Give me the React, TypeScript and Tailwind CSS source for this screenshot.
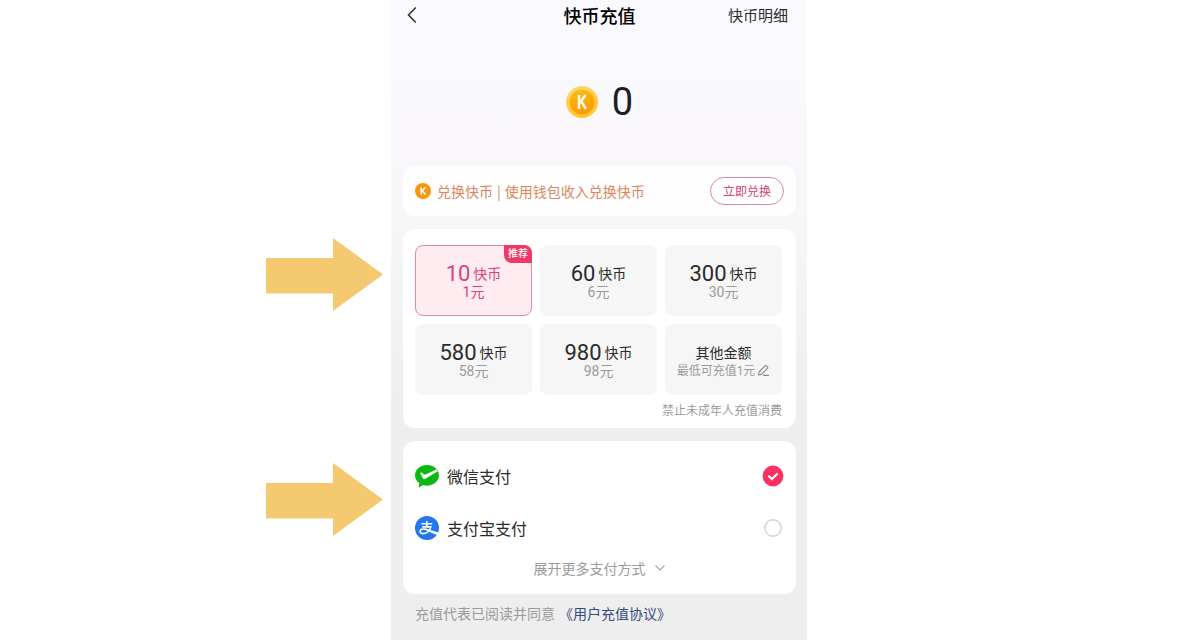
import { useState } from "react";

const packs = [
  { coins: 10, price: 1, recommended: true },
  { coins: 60, price: 6 },
  { coins: 300, price: 30 },
  { coins: 580, price: 58 },
  { coins: 980, price: 98 },
];

function Arrow() {
  return (
    <svg width="117" height="73" viewBox="0 0 117 73" fill="#f4c970" aria-hidden="true">
      <path d="M0 20H67V0L117 36.500L67 73V55.500H0Z" />
    </svg>
  );
}

function BigCoin() {
  return (
    <svg width="32" height="32" viewBox="0 0 32 32" aria-hidden="true">
      <defs>
        <linearGradient id="coin" x1="0" y1="0" x2="0.3" y2="1">
          <stop offset="0" stopColor="#ecc32a" />
          <stop offset="0.45" stopColor="#fcae0c" />
          <stop offset="1" stopColor="#fd9c0a" />
        </linearGradient>
        <linearGradient id="rim" x1="0" y1="0" x2="0.4" y2="1">
          <stop offset="0" stopColor="#fbdc72" />
          <stop offset="1" stopColor="#fdc62c" />
        </linearGradient>
      </defs>
      <circle cx="16" cy="16" r="16" fill="url(#rim)" />
      <circle cx="16" cy="16" r="12.500" fill="url(#coin)" />
      <path d="M13 9V23M19.600 9L13.400 17.500M15.200 15.200L20 23" fill="none" stroke="#fffbe8" strokeWidth="2.500" />
    </svg>
  );
}

function SmallCoin() {
  return (
    <svg width="16" height="16" viewBox="0 0 16 16" aria-hidden="true">
      <circle cx="8" cy="8" r="8" fill="#f8960f" />
      <path d="M6.200 4.500V11.500M10.200 4.500L6.400 8.800M7.300 7.700L10.400 11.500" fill="none" stroke="#fff" strokeWidth="1.600" />
    </svg>
  );
}

function WechatPay() {
  return (
    <svg width="24" height="24" viewBox="0 0 24 24" aria-hidden="true">
      <path d="M12 1C5.300 1 0 5.600 0 11.300c0 3.200 1.700 6 4.300 7.900L3.700 23.500l4.500-2.400c1.200.4 2.500.6 3.800.6 6.700 0 12-4.700 12-10.400S18.700 1 12 1Z" fill="#0bb80f" />
      <path d="M5.500 8.900c.5-.5 1-.4 1.600 0l2.900 1.900L21.300 5.500l1.500 1.700L10 14.900c-.9.5-1.600.3-2-.5L5.400 9.800c-.2-.4-.1-.7.100-.9Z" fill="#fff" />
    </svg>
  );
}

function Alipay() {
  return (
    <svg width="24" height="24" viewBox="0 0 24 24" fill="none" aria-hidden="true">
      <circle cx="12" cy="12" r="12" fill="#2276ee" />
      <path d="M6.500 7.700H17.200M11.800 5V10.800M7.200 10.900H15.800C15 14.200 12.300 17.600 8.400 17.600C4 17.600 4 13 8.200 13" stroke="#fff" strokeWidth="1.600" />
      <path d="M8.200 12.200C12.500 12.200 16.500 14.800 23.300 16.300L22 18.900C16.500 17.500 13 14.200 8.200 13.800Z" fill="#fff" />
    </svg>
  );
}

function RadioMark({ checked }: { checked: boolean }) {
  return (
    <svg width="22" height="22" viewBox="0 0 22 22" fill="none" aria-hidden="true">
      {checked ? (
        <>
          <circle cx="11" cy="11" r="10.400" fill="#fb3163" />
          <path d="M6.400 10.700L9.900 14L15.600 8.500" stroke="#fff" strokeWidth="2" />
        </>
      ) : (
        <circle cx="11" cy="11" r="8.200" stroke="#d4d4d4" strokeWidth="1.500" />
      )}
    </svg>
  );
}

export default function App() {
  const [selected, setSelected] = useState(10);
  const [method, setMethod] = useState("wechat");

  const methods = [
    { id: "wechat", name: "微信支付", icon: <WechatPay /> },
    { id: "alipay", name: "支付宝支付", icon: <Alipay /> },
  ];

  return (
    <div className="grid min-h-screen grid-cols-[1fr_minmax(0,416px)_1fr] bg-white pr-0.5 font-['Noto_Sans_CJK_SC',sans-serif] text-[#2b2b2b]">
      <aside className="flex flex-col items-end gap-38 pt-[238px] pr-2">
        <Arrow />
        <Arrow />
      </aside>

      <main className="bg-linear-to-b from-[#fafafe] from-0% via-[#f9f6fa] via-32% to-[#eeeeee] to-65% pr-[11px] pl-3">
        <header className="grid h-[30px] grid-cols-3 items-center">
          <button aria-label="返回" className="justify-self-start pl-1">
            <svg width="10" height="18" viewBox="0 0 10 18" fill="none" stroke="#333" strokeWidth="1.600" aria-hidden="true">
              <path d="M8.800 1.500L1.500 9L8.800 16.500" />
            </svg>
          </button>
          <h1 className="text-center text-lg font-medium whitespace-nowrap text-black">快币充值</h1>
          <a href="#details" className="justify-self-end pr-2 text-[15px] whitespace-nowrap">快币明细</a>
        </header>

        <section className="flex h-34 items-center justify-center gap-3.5 pt-2">
          <BigCoin />
          <span className="font-[Roboto,sans-serif] text-[38px] leading-none text-[#1d1d22]">0</span>
        </section>

        <section className="flex h-[50px] items-center gap-1.5 rounded-xl bg-white/85 px-3">
          <SmallCoin />
          <p className="flex-1 text-sm whitespace-nowrap text-[#d9875f]">
            兑换快币<span className="px-1">|</span>使用钱包收入兑换快币
          </p>
          <button className="h-7 rounded-full border border-[#d98aa5] px-3 text-xs text-[#d2447c]">立即兑换</button>
        </section>

        <section className="mt-[13px] rounded-xl bg-white pt-4 pr-3.5 pb-2 pl-3">
          <div className="grid grid-cols-3 gap-2">
            {packs.map((p) => {
              const on = selected === p.coins;
              return (
                <button
                  key={p.coins}
                  aria-pressed={on}
                  onClick={() => setSelected(p.coins)}
                  className={`relative flex h-[71px] flex-col items-center justify-center rounded-lg border pt-0.5 font-[Roboto,'Noto_Sans_CJK_SC',sans-serif] ${
                    on ? "border-[#dc8ba3] bg-[#ffecf1] text-[#d5447a]" : "border-[#f6f6f6] bg-[#f6f6f6]"
                  }`}
                >
                  <span className="flex items-center gap-[3px] text-sm leading-5">
                    <span className="text-[22px] leading-5">{p.coins}</span>
                    快币
                  </span>
                  <span className={`text-sm leading-4 ${on ? "" : "text-[#9b9b9b]"}`}>{p.price}元</span>
                  {p.recommended && (
                    <span className="absolute -top-px -right-px rounded-tr-lg rounded-bl-lg bg-[#ee3866] px-1 text-[10px] leading-[18px] font-medium text-white">
                      推荐
                    </span>
                  )}
                </button>
              );
            })}
            <button className="flex h-[71px] flex-col items-center justify-center rounded-lg bg-[#f6f6f6] pt-0.5 font-[Roboto,'Noto_Sans_CJK_SC',sans-serif]">
              <span className="text-sm leading-5">其他金额</span>
              <span className="flex items-center gap-0.5 text-xs leading-4 whitespace-nowrap text-[#9b9b9b]">
                最低可充值1元
                <svg width="13" height="13" viewBox="0 0 13 13" fill="none" stroke="#8c8c8c" strokeWidth="1.200" strokeLinejoin="round" aria-hidden="true">
                  <path d="M1.500 11L2 8L8 1.800Q8.700 1.200 9.400 1.900L10.400 2.900Q11 3.600 10.400 4.300L4.500 10.300L1.500 11ZM6 11.400H12" />
                </svg>
              </span>
            </button>
          </div>
          <p className="mt-[5px] text-right text-xs leading-5 text-[#9b9b9b]">禁止未成年人充值消费</p>
        </section>

        <section className="mt-[13px] rounded-xl bg-white px-3 pt-[9px] pb-3">
          {methods.map((m) => (
            <label key={m.id} className="flex h-13 cursor-pointer items-center gap-2">
              {m.icon}
              <span className="flex-1 text-base">{m.name}</span>
              <input
                type="radio"
                name="method"
                className="sr-only"
                checked={method === m.id}
                onChange={() => setMethod(m.id)}
              />
              <RadioMark checked={method === m.id} />
            </label>
          ))}
          <button className="flex h-7 w-full items-center justify-center gap-2 text-sm text-[#9b9b9b]">
            展开更多支付方式
            <svg width="12" height="8" viewBox="0 0 12 8" fill="none" stroke="#a8a8a8" strokeWidth="1.200" aria-hidden="true">
              <path d="M1.500 1.500L6 6L10.500 1.500" />
            </svg>
          </button>
        </section>

        <p className="flex h-[38px] items-center gap-1 pl-3 text-sm whitespace-nowrap text-[#9b9b9b]">
          充值代表已阅读并同意
          <a href="#agreement" className="text-[#354a80]">《用户充值协议》</a>
        </p>
      </main>
    </div>
  );
}
